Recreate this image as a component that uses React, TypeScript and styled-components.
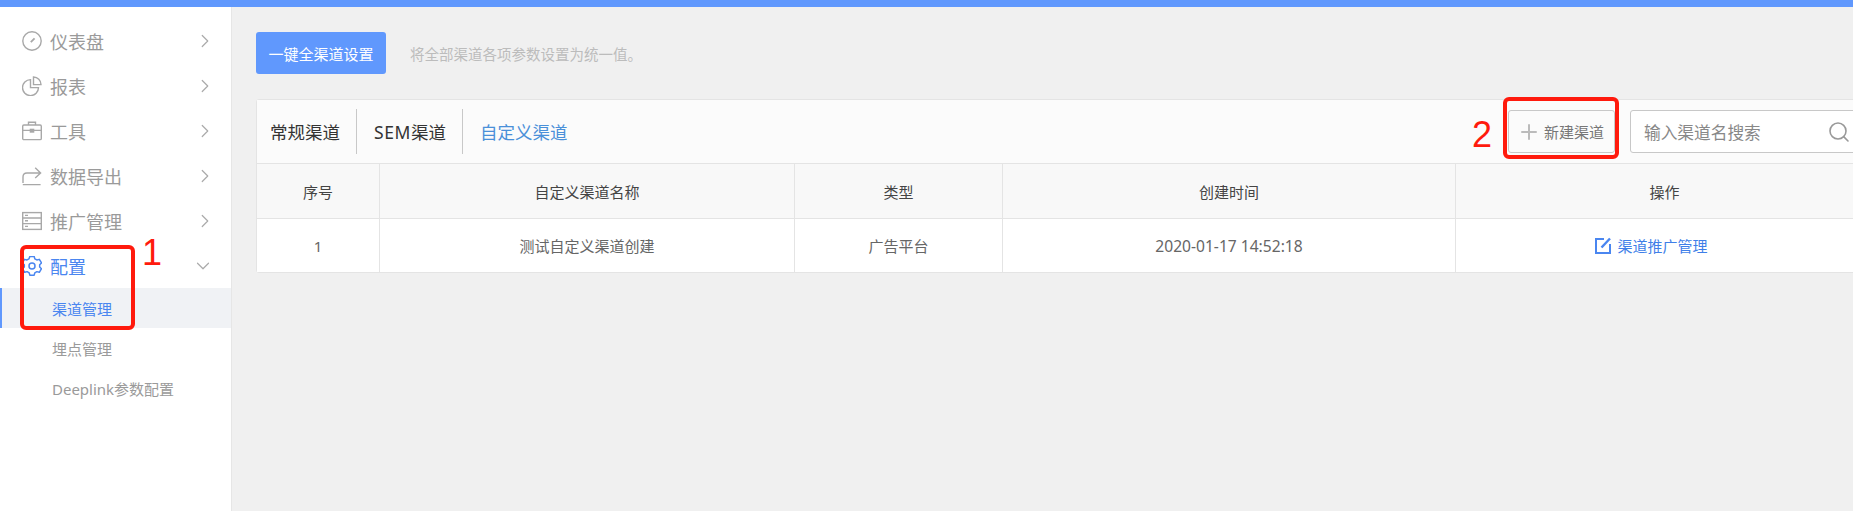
import React from "react";
import styled, { createGlobalStyle } from "styled-components";
import { ChevronRight, ChevronDown, Plus, Search } from "lucide-react";

const GlobalStyle = createGlobalStyle`
  html, body {
    margin: 0;
    padding: 0;
    height: 100%;
    overflow: hidden;
    background: #f0f0f0;
    font-family: "Noto Sans", "Noto Sans CJK SC", sans-serif;
  }
  * { box-sizing: border-box; }
`;

const Page = styled.div`
  position: relative;
  width: 1853px;
  height: 511px;
  overflow: hidden;
  background: #f0f0f0;
  border-top: 7px solid #6098fd;
  display: flex;
`;

const Sidebar = styled.aside`
  flex: 0 0 232px;
  height: 100%;
  background: #fff;
  border-right: 1px solid #e6e6e6;
  padding-top: 11px;
`;

const MenuRow = styled.div<{ $active?: boolean }>`
  height: 45px;
  display: flex;
  align-items: center;
  padding: 0 ${(p) => (p.$active ? "17px" : "15px")} 0 22px;
  gap: 8px;
  font-size: 18px;
  color: ${(p) => (p.$active ? "#4a86f0" : "#9a9a9a")};
  svg.icon { flex: none; }
  svg.arrow { margin-left: auto; color: #aaa; }
`;

const SubRow = styled.div<{ $active?: boolean }>`
  height: 40px;
  display: flex;
  align-items: center;
  padding-left: 52px;
  font-size: 15px;
  color: ${(p) => (p.$active ? "#4a86f0" : "#9a9a9a")};
  background: ${(p) => (p.$active ? "#f0f2f5" : "transparent")};
  border-left: ${(p) => (p.$active ? "2px solid #6098fd" : "none")};
  ${(p) => p.$active && "padding-left: 50px;"}
`;

const Main = styled.main`
  flex: none;
  width: 1617px;
  padding: 25px 0 0 24px;
`;

const TopActions = styled.div`
  display: flex;
  align-items: center;
  gap: 24px;
  height: 42px;
`;

const PrimaryButton = styled.button`
  width: 130px;
  height: 42px;
  border: none;
  border-radius: 3px;
  background: #6098fd;
  color: #fff;
  font: inherit;
  font-size: 15px;
  padding: 0;
`;

const Hint = styled.span`
  font-size: 14.5px;
  color: #bcbcbc;
`;

const Card = styled.section`
  margin-top: 25px;
  width: 1618px;
  background: #fff;
  border: 1px solid #e4e4e4;
  border-radius: 3px 0 0 3px;
`;

const TabBar = styled.div`
  height: 64px;
  background: #fbfbfb;
  border-bottom: 1px solid #e4e4e4;
  display: flex;
  align-items: center;
  padding-left: 13px;
`;

const Tab = styled.div<{ $active?: boolean }>`
  height: 45px;
  display: flex;
  align-items: center;
  font-size: 17.5px;
  color: ${(p) => (p.$active ? "#4a90d9" : "#333")};
  padding-right: 16px;
  margin-right: 17px;
  border-right: ${(p) => (p.$active ? "none" : "1px solid #c8c8c8")};
`;

const TabLatin = styled.span`
  letter-spacing: 0.6px;
`;

const TabTools = styled.div`
  margin-left: auto;
  display: flex;
  gap: 15px;
`;

const GhostButton = styled.button`
  width: 107px;
  height: 43px;
  display: flex;
  align-items: center;
  padding: 0 0 0 8px;
  gap: 3px;
  background: #fbfbfb;
  border: 1px solid #c8c8c8;
  border-radius: 3px;
  font: inherit;
  font-size: 15px;
  color: #777;
`;

const SearchBox = styled.div`
  width: 243px;
  height: 43px;
  background: #fff;
  border: 1px solid #c8c8c8;
  border-radius: 3px;
  display: flex;
  align-items: center;
  padding: 0 21px 0 13px;
  font-size: 16.7px;
  color: #888;
  justify-content: space-between;
`;

const TableRow = styled.div<{ $head?: boolean }>`
  display: grid;
  grid-template-columns: 123px 415px 208px 453px 417px;
  height: ${(p) => (p.$head ? "55px" : "53px")};
  background: ${(p) => (p.$head ? "#f8f8f8" : "#fff")};
  border-bottom: ${(p) => (p.$head ? "1px solid #e4e4e4" : "none")};
  color: ${(p) => (p.$head ? "#444" : "#666")};
`;

const Cell = styled.div`
  display: flex;
  align-items: center;
  justify-content: center;
  font-size: 15px;
  border-right: 1px solid #e4e4e4;
  &:last-child { border-right: none; }
`;

const DateText = styled.span`
  font-size: 15.6px;
`;

const ActionLink = styled.span`
  display: flex;
  align-items: center;
  gap: 6px;
  margin-right: 26px;
  color: #3f7fe8;
`;

const Mark = styled.div<{ $x: number; $y: number; $w: number; $h: number }>`
  position: absolute;
  left: ${(p) => p.$x}px;
  top: ${(p) => p.$y}px;
  width: ${(p) => p.$w}px;
  height: ${(p) => p.$h}px;
  border: 4px solid #ff1a0d;
  border-radius: 6px;
`;

const MarkNumber = styled.span<{ $x: number; $y: number }>`
  position: absolute;
  left: ${(p) => p.$x}px;
  top: ${(p) => p.$y}px;
  font-family: "Liberation Sans", sans-serif;
  font-size: 36px;
  line-height: 40px;
  color: #ff1a0d;
`;

const DashIcon = () => (
  <svg className="icon" width="20" height="20" viewBox="0 0 20 20" fill="none" stroke="#a8a8a8" strokeWidth="1.4">
    <circle cx="10" cy="10" r="9.2" />
    <path d="M8.8 11.2 L12.6 7.4" strokeWidth="1.8" />
  </svg>
);

const PieIcon = () => (
  <svg className="icon" width="20" height="20" viewBox="0 0 20 20" fill="none" stroke="#a8a8a8" strokeWidth="1.4">
    <path d="M8.5 3.6 A8 8 0 1 0 16.5 11.6 H8.5 Z" />
    <path d="M11.5 1 A7.6 7.6 0 0 1 19 8.6 H11.5 Z" />
  </svg>
);

const CaseIcon = () => (
  <svg className="icon" width="20" height="20" viewBox="0 0 20 20" fill="none" stroke="#a8a8a8" strokeWidth="1.4">
    <rect x="0.7" y="4" width="18.6" height="14.6" rx="1.2" />
    <path d="M6.5 4 V1.2 H13.500 V4 M0.7 9.400 H8 M12 9.400 H19.300" />
    <rect x="8.400" y="8.400" width="3.200" height="2.600" fill="#a8a8a8" />
  </svg>
);

const ExportIcon = () => (
  <svg className="icon" width="20" height="20" viewBox="0 0 20 20" fill="none" stroke="#a8a8a8" strokeWidth="1.4">
    <path d="M0.8 18.600 H18.600 M1 17 V11 Q1 7 5 7 H18 M13.200 1.800 L18.600 7 L13.200 12" />
  </svg>
);

const ListIcon = () => (
  <svg className="icon" width="20" height="20" viewBox="0 0 20 20" fill="none" stroke="#a8a8a8" strokeWidth="1.4">
    <rect x="0.7" y="1.600" width="18.600" height="16.800" />
    <path d="M0.7 7 H19.300 M0.7 12.600 H19.300 M3 4.400 H6 M3 9.800 H6 M3 15.400 H6" />
  </svg>
);

const GearIcon = () => (
  <svg className="icon" width="20" height="20" viewBox="0 0 24 24" fill="none" stroke="#4a86f0" strokeWidth="1.8" strokeLinejoin="round">
    <path d="M9.400 1.600 h5.200 l.8 3 2.400 1.400 3-.8 2.600 4.500-2.200 2.200 v2.800 l2.200 2.200-2.600 4.500-3-.8-2.400 1.400-.8 3 h-5.200 l-.8-3-2.400-1.400-3 .8-2.600-4.500 2.200-2.200 v-2.800 L.4 9.700 l2.600-4.500 3 .8 2.400-1.400 z" transform="translate(0 -1) scale(1 .96)" />
    <circle cx="12" cy="12" r="3.600" />
  </svg>
);

const EditIcon = () => (
  <svg width="16" height="17" viewBox="0 0 16 17" fill="none" stroke="#4a86f0" strokeWidth="2">
    <path d="M9 2 H1 V16 H15 V7" />
    <path d="M6.500 10.500 L15 1.500" strokeWidth="2.400" />
  </svg>
);

const menu = [
  { label: "仪表盘", icon: <DashIcon /> },
  { label: "报表", icon: <PieIcon /> },
  { label: "工具", icon: <CaseIcon /> },
  { label: "数据导出", icon: <ExportIcon /> },
  { label: "推广管理", icon: <ListIcon /> },
];

export default function App() {
  return (
    <>
      <GlobalStyle />
      <Page>
        <Sidebar>
          {menu.map((m) => (
            <MenuRow key={m.label}>
              {m.icon}
              {m.label}
              <ChevronRight className="arrow" size={22} strokeWidth={1.3} />
            </MenuRow>
          ))}
          <MenuRow $active>
            <GearIcon />
            配置
            <ChevronDown className="arrow" size={22} strokeWidth={1.3} />
          </MenuRow>
          <SubRow $active>渠道管理</SubRow>
          <SubRow>埋点管理</SubRow>
          <SubRow>Deeplink参数配置</SubRow>
        </Sidebar>
        <Main>
          <TopActions>
            <PrimaryButton>一键全渠道设置</PrimaryButton>
            <Hint>将全部渠道各项参数设置为统一值。</Hint>
          </TopActions>
          <Card>
            <TabBar>
              <Tab>常规渠道</Tab>
              <Tab><TabLatin>SEM</TabLatin>渠道</Tab>
              <Tab $active>自定义渠道</Tab>
              <TabTools>
                <GhostButton>
                  <Plus size={24} color="#bbb" strokeWidth={2} />
                  新建渠道
                </GhostButton>
                <SearchBox>
                  输入渠道名搜索
                  <Search size={24} color="#999" strokeWidth={1.6} />
                </SearchBox>
              </TabTools>
            </TabBar>
            <TableRow $head>
              <Cell>序号</Cell>
              <Cell>自定义渠道名称</Cell>
              <Cell>类型</Cell>
              <Cell>创建时间</Cell>
              <Cell>操作</Cell>
            </TableRow>
            <TableRow>
              <Cell>1</Cell>
              <Cell>测试自定义渠道创建</Cell>
              <Cell>广告平台</Cell>
              <Cell><DateText>2020-01-17 14:52:18</DateText></Cell>
              <Cell>
                <ActionLink>
                  <EditIcon />
                  渠道推广管理
                </ActionLink>
              </Cell>
            </TableRow>
          </Card>
        </Main>
        <Mark $x={20} $y={238} $w={115} $h={85} />
        <MarkNumber $x={142} $y={226}>1</MarkNumber>
        <Mark $x={1503} $y={90} $w={116} $h={62} />
        <MarkNumber $x={1472} $y={108}>2</MarkNumber>
      </Page>
    </>
  );
}
